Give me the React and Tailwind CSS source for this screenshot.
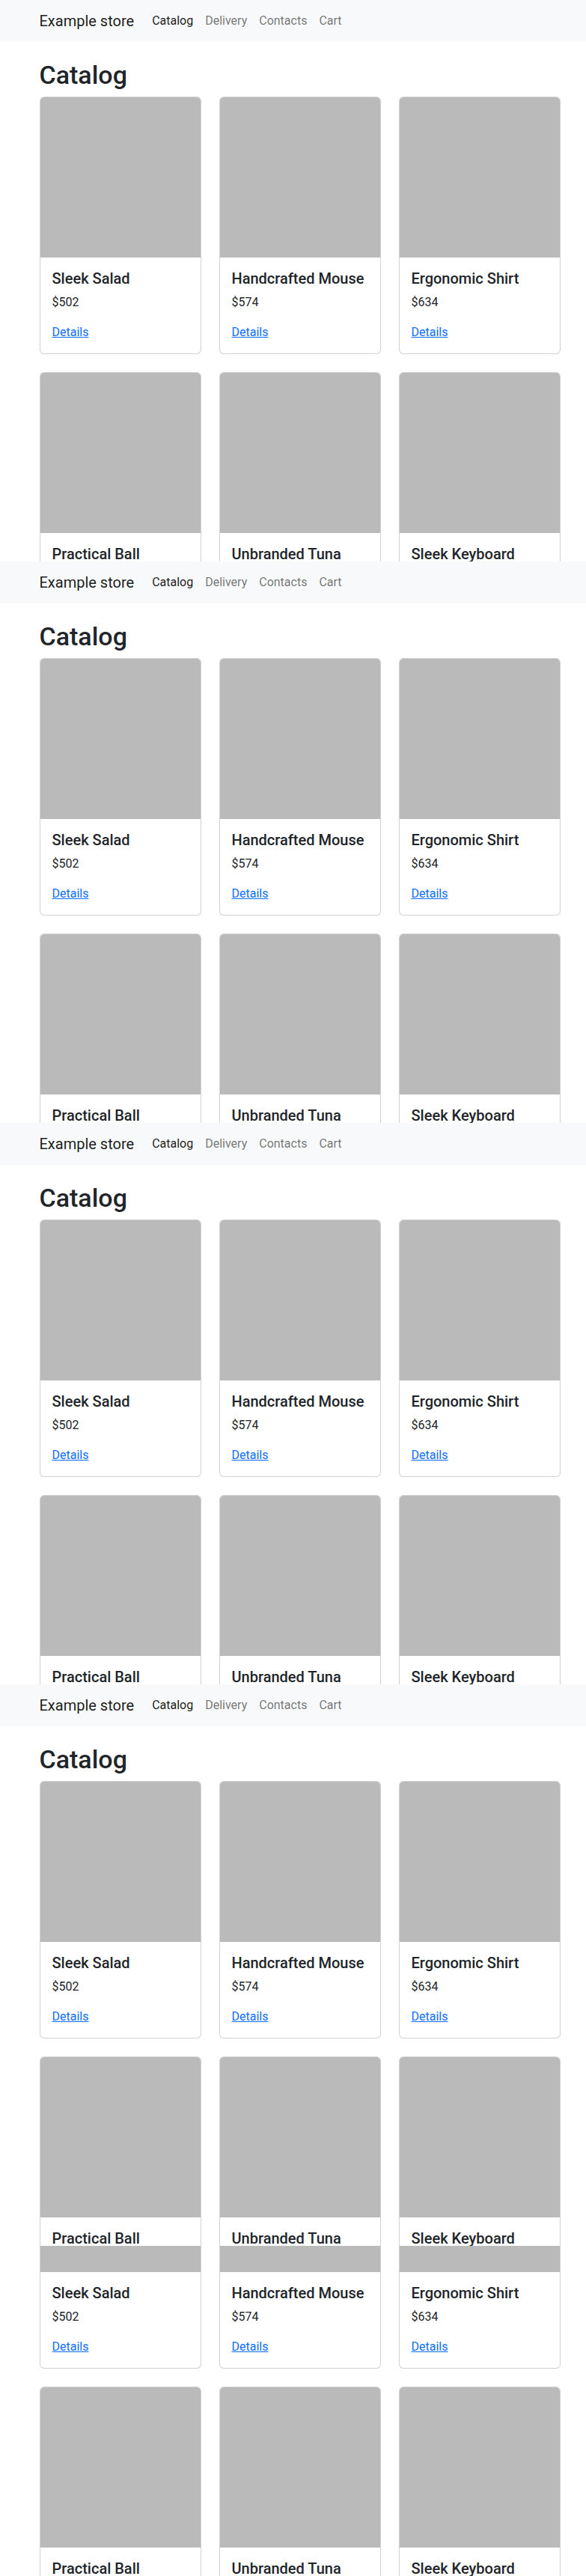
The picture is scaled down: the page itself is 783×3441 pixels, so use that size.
import React from 'react';

const LINKS = [
  { label: 'Catalog', active: true },
  { label: 'Delivery' },
  { label: 'Contacts' },
  { label: 'Cart' },
];

const PRODUCTS = [
  { id: 1, name: 'Sleek Salad', price: 502 },
  { id: 2, name: 'Handcrafted Mouse', price: 574 },
  { id: 3, name: 'Ergonomic Shirt', price: 634 },
  { id: 4, name: 'Practical Ball', price: 411 },
  { id: 5, name: 'Unbranded Tuna', price: 287 },
  { id: 6, name: 'Sleek Keyboard', price: 159 },
];

function Navbar() {
  return (
    <nav className="h-14 bg-[#f8f9fa] flex items-center pl-[52.5px]">
      <a href="#" className="text-[20px] leading-[30px] text-black/90 mr-4">Example store</a>
      <ul className="flex">
        {LINKS.map(l => (
          <li key={l.label}>
            <a href="#" className={`block px-2 py-2 text-base leading-6 ${l.active ? 'text-black/90' : 'text-black/55'}`}>
              {l.label}
            </a>
          </li>
        ))}
      </ul>
    </nav>
  );
}

function ProductCard({ product }) {
  return (
    <div className="flex flex-col border border-black/[0.175] rounded-[6px] overflow-hidden bg-white">
      <div className="h-[214px] bg-[#bababa]" />
      <div className="p-4">
        <h5 className="text-xl font-medium leading-[1.2] mb-2 text-[#212529] whitespace-nowrap">{product.name}</h5>
        <p className="mb-4 leading-6 text-[#212529]">${product.price}</p>
        <a href="#" className="leading-6 text-[#0d6efd] underline">Details</a>
      </div>
    </div>
  );
}

function Page() {
  return (
    <div className="bg-white">
      <Navbar />
      <main className="ml-[52.5px] w-[696px] pt-6">
        <h1 className="text-[34px] font-medium leading-[1.2] mb-2 text-[#212529]">Catalog</h1>
        <div className="grid grid-cols-3 gap-6">
          {PRODUCTS.map(p => <ProductCard key={p.id} product={p} />)}
        </div>
      </main>
    </div>
  );
}

export default function App() {
  return (
    <div className="w-[783px] bg-white text-[#212529]" style={{ fontFamily: 'Roboto, "Liberation Sans", sans-serif' }}>
      {/* the same viewport captured four times */}
      {[0, 1, 2, 3].map(i => (
        <div key={i} className="h-[750px] overflow-hidden">
          <Page />
        </div>
      ))}
      {/* last capture, scrolled to the page bottom */}
      <div className="h-[441px] overflow-hidden">
        <div className="-mt-[309px]">
          <Page />
        </div>
      </div>
    </div>
  );
}
